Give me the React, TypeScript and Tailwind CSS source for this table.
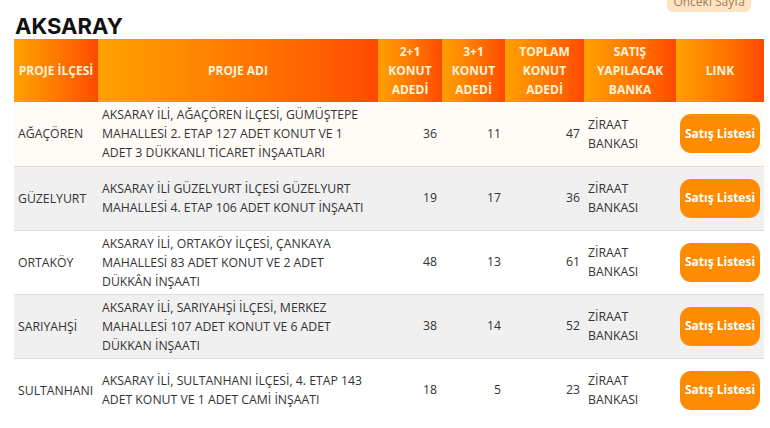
import React from 'react';

type Row = {
    ilce: string;
    ad: string;
    k21: number;
    k31: number;
    toplam: number;
};

const rows: Row[] = [
    { ilce: 'AĞAÇÖREN', ad: 'AKSARAY İLİ, AĞAÇÖREN İLÇESİ, GÜMÜŞTEPE MAHALLESİ 2. ETAP 127 ADET KONUT VE 1 ADET 3 DÜKKANLI TİCARET İNŞAATLARI', k21: 36, k31: 11, toplam: 47 },
    { ilce: 'GÜZELYURT', ad: 'AKSARAY İLİ GÜZELYURT İLÇESİ GÜZELYURT MAHALLESİ 4. ETAP 106 ADET KONUT İNŞAATI', k21: 19, k31: 17, toplam: 36 },
    { ilce: 'ORTAKÖY', ad: 'AKSARAY İLİ, ORTAKÖY İLÇESİ, ÇANKAYA MAHALLESİ 83 ADET KONUT VE 2 ADET DÜKKÂN İNŞAATI', k21: 48, k31: 13, toplam: 61 },
    { ilce: 'SARIYAHŞİ', ad: 'AKSARAY İLİ, SARIYAHŞİ İLÇESİ, MERKEZ MAHALLESİ 107 ADET KONUT VE 6 ADET DÜKKAN İNŞAATI', k21: 38, k31: 14, toplam: 52 },
    { ilce: 'SULTANHANI', ad: 'AKSARAY İLİ, SULTANHANI İLÇESİ, 4. ETAP 143 ADET KONUT VE 1 ADET CAMİ İNŞAATI', k21: 18, k31: 5, toplam: 23 },
];

const headers: string[][] = [
    ['PROJE İLÇESİ'],
    ['PROJE ADI'],
    ['2+1', 'KONUT', 'ADEDİ'],
    ['3+1', 'KONUT', 'ADEDİ'],
    ['TOPLAM', 'KONUT', 'ADEDİ'],
    ['SATIŞ', 'YAPILACAK', 'BANKA'],
    ['LINK'],
];

export default function App() {
    return (
        <div className="w-[770px] h-[428px] overflow-hidden bg-white font-['Open_Sans',sans-serif] text-[#333]">
            <div className="-mt-[9px] px-[14px]">
                <div className="flex justify-end pr-[5px]">
                    <span className="rounded-md bg-[#fde3c0] px-[6px] text-[12px] leading-[21px] text-[#9c7f5c]">
                        Önceki Sayfa
                    </span>
                </div>
                <h2 className="mt-[1px] pl-[1px] font-['Inter',sans-serif] text-[22px] font-bold leading-[26px] text-[#111]">
                    AKSARAY
                </h2>

                <table className="w-[750px] table-fixed border-collapse text-[12.25px]">
                    <colgroup>
                        <col className="w-[84px]" />
                        <col className="w-[280px]" />
                        <col className="w-[64px]" />
                        <col className="w-[63px]" />
                        <col className="w-[79px]" />
                        <col className="w-[92px]" />
                        <col className="w-[88px]" />
                    </colgroup>
                    <thead>
                        <tr>
                            {headers.map((h, i) => (
                                <th
                                    key={i}
                                    className="h-[63px] bg-gradient-to-r from-[#ffa100] to-[#ff4800] px-1 text-center text-[12px] font-bold leading-[19px] text-[#fff3dc]"
                                >
                                    {h.map((line, j) => (
                                        <div key={j}>{line}</div>
                                    ))}
                                </th>
                            ))}
                        </tr>
                    </thead>
                    <tbody>
                        {rows.map((r, i) => {
                            const last = i === rows.length - 1;
                            const cell = last ? '' : 'border-b border-[#dddddd]';
                            return (
                                <tr
                                    key={r.ilce}
                                    className={
                                        i % 2 === 1
                                            ? 'bg-[#f0f0f0]'
                                            : i === 0
                                              ? 'bg-[#fffcf8]'
                                              : 'bg-white'
                                    }
                                >
                                    <td className={`h-[64px] px-1 leading-[19px] ${cell}`}>{r.ilce}</td>
                                    <td className={`px-1 leading-[19px] ${cell}`}>{r.ad}</td>
                                    <td className={`pr-[5px] text-right ${cell}`}>{r.k21}</td>
                                    <td className={`pr-[4px] text-right ${cell}`}>{r.k31}</td>
                                    <td className={`pr-[4px] text-right ${cell}`}>{r.toplam}</td>
                                    <td className={`px-1 leading-[19px] ${cell}`}>
                                        ZİRAAT
                                        <br />
                                        BANKASI
                                    </td>
                                    <td className={`px-1 ${cell}`}>
                                        <button className="h-[39px] w-[80px] rounded-[11px] bg-[#ff8c00] text-[12px] font-bold text-white">
                                            Satış Listesi
                                        </button>
                                    </td>
                                </tr>
                            );
                        })}
                    </tbody>
                </table>
            </div>
        </div>
    );
}
